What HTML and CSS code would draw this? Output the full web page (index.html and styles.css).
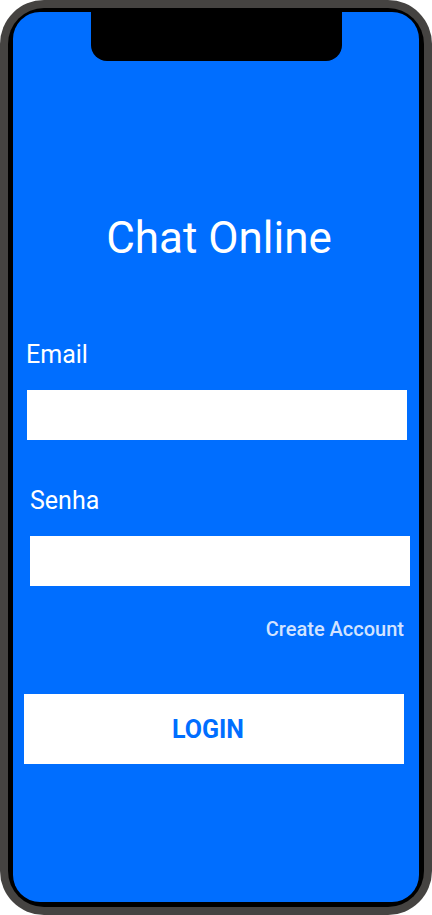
FILE: index.html
```html
<!DOCTYPE html>
<html lang="pt">
<head>
<meta charset="utf-8">
<title>Chat Online</title>
<link rel="stylesheet" href="styles.css">
</head>
<body>
<div class="phone">
  <div class="bezel">
    <div class="screen">
      <div class="notch"></div>
      <h1 class="title">Chat Online</h1>
      <label class="label label-email" for="email">Email</label>
      <input class="field field-email" id="email" type="text">
      <label class="label label-senha" for="senha">Senha</label>
      <input class="field field-senha" id="senha" type="password">
      <a class="create" href="#">Create Account</a>
      <button class="login" type="button">LOGIN</button>
    </div>
  </div>
</div>
</body>
</html>
```
FILE: styles.css
```css
html, body {
  margin: 0;
  padding: 0;
  background: #ffffff;
}

body {
  font-family: Roboto, "Noto Sans", sans-serif;
}

.phone {
  width: 432px;
  height: 915px;
  box-sizing: border-box;
  background: #454341;
  border-radius: 44px;
  padding: 8px;
}

.bezel {
  height: 100%;
  box-sizing: border-box;
  background: #000000;
  border-radius: 36px;
  padding: 4px 5px 5px 5px;
}

.screen {
  height: 100%;
  background: #006eff;
  border-radius: 27px;
  display: flex;
  flex-direction: column;
  align-items: flex-start;
  overflow: hidden;
}

.notch {
  align-self: center;
  width: 251px;
  height: 49px;
  background: #000000;
  border-radius: 0 0 16px 16px;
  flex: none;
}

.title {
  align-self: stretch;
  margin: 155px 0 0 0;
  padding-left: 6px;
  text-align: center;
  color: #ffffff;
  font-size: 44px;
  line-height: 44px;
  font-weight: 400;
}

.label {
  color: #ffffff;
  font-size: 25px;
  line-height: 25px;
  font-weight: 400;
}

.label-email {
  margin: 82px 0 0 13px;
}

.label-senha {
  margin: 48px 0 0 17px;
}

.field {
  width: 380px;
  height: 50px;
  box-sizing: border-box;
  border: none;
  background: #ffffff;
  margin: 23px 0 0 0;
  padding: 0 10px;
  outline: none;
}

.field-email {
  margin-left: 14px;
}

.field-senha {
  margin-left: 17px;
}

.create {
  align-self: flex-end;
  margin: 33px 15px 0 0;
  color: #d2e3ff;
  font-size: 20px;
  line-height: 20px;
  font-weight: 500;
  text-decoration: none;
}

.login {
  margin: 55px 0 0 11px;
  width: 380px;
  height: 70px;
  border: none;
  background: #ffffff;
  color: #006eff;
  font-family: Roboto, "Noto Sans", sans-serif;
  font-size: 25px;
  font-weight: 700;
  padding: 0 12px 0 0;
}
```
